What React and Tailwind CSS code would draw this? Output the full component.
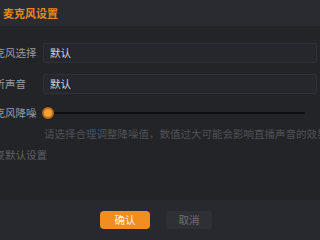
export default function App() {
    const font = { fontFamily: '"Noto Sans CJK SC", "Noto Sans", sans-serif' };

    return (
        <div className="w-[320px] h-[240px] overflow-hidden bg-[#232428] flex flex-col" style={font}>

            <div className="h-[26px] shrink-0 bg-[#2a2b31] flex items-center pl-[3px]">
                <span className="text-[11px] leading-none font-bold text-[#e08a22]">麦克风设置</span>
            </div>

            <div className="flex-1 flex flex-col pt-[17px]">

                <div className="flex items-center h-[20px] ml-[-16px]">
                    <span className="w-[59px] shrink-0 text-[10.5px] text-[#9a9ba0] whitespace-nowrap">麦克风选择</span>
                    <div className="flex-1 mr-[3px] h-[20px] bg-[#26272c] border border-[#303137] rounded-[2px] flex items-center px-[6px]">
                        <span className="text-[10.5px] text-[#d8d8da]">默认</span>
                    </div>
                </div>

                <div className="flex items-center h-[20px] ml-[-16px] mt-[11px]">
                    <span className="w-[59px] shrink-0 text-[10.5px] text-[#9a9ba0] whitespace-nowrap">监听声音</span>
                    <div className="flex-1 mr-[3px] h-[20px] bg-[#26272c] border border-[#303137] rounded-[2px] flex items-center px-[6px]">
                        <span className="text-[10.5px] text-[#d8d8da]">默认</span>
                    </div>
                </div>

                <div className="flex items-center h-[16px] ml-[-16px] mt-[11px]">
                    <span className="w-[59px] shrink-0 text-[10.5px] text-[#9a9ba0] whitespace-nowrap">麦克风降噪</span>
                    <div className="relative w-[262px] h-[16px] flex items-center">
                        <div className="ml-[4px] flex-1 h-[2px] bg-[#0e0e10] rounded-full" />
                        <div className="absolute left-[-1px] top-[2px] w-[12px] h-[12px] rounded-full bg-[#f5a238] border-[2px] border-[#b86a16]" />
                    </div>
                </div>

                <div className="ml-[44px] mt-[5px] whitespace-nowrap text-[10.5px] text-[#505156]">
                    请选择合理调整降噪值，数值过大可能会影响直播声音的效果
                </div>

                <div className="ml-[-16px] mt-[5px] whitespace-nowrap text-[10.5px] text-[#606166]">
                    恢复默认设置
                </div>

            </div>

            <div className="h-[40px] shrink-0 bg-[#28292e] flex items-start pt-[11px] pl-[100px] gap-[16px]">
                <button className="w-[50px] h-[18px] rounded-[4px] bg-[#f28d1e] text-[10.5px] text-[#fff3e6] leading-none">
                    确认
                </button>
                <button className="w-[46px] h-[18px] rounded-[3px] bg-[#2f3035] text-[10.5px] text-[#6e6f74] leading-none">
                    取消
                </button>
            </div>
        </div>
    );
}
